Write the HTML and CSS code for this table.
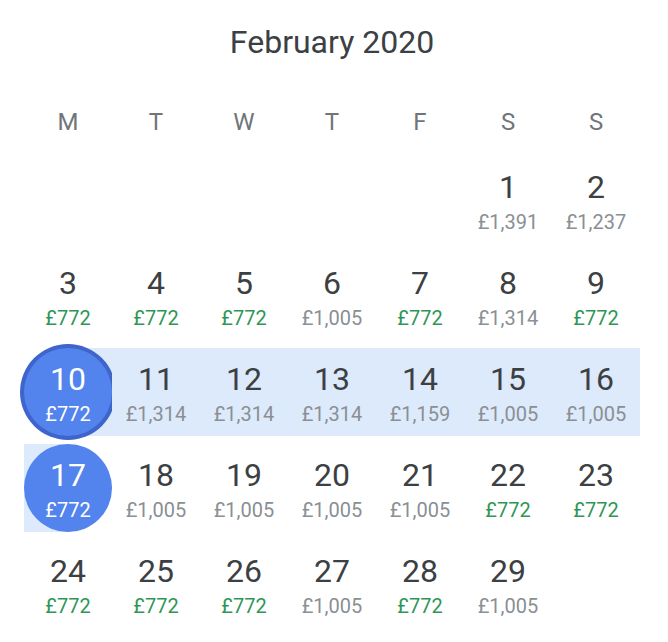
FILE: index.html
```html
<!DOCTYPE html>
<html lang="en">
<head>
<meta charset="utf-8">
<title>February 2020</title>
<link rel="stylesheet" href="styles.css">
</head>
<body>
<div class="calendar">
  <h1 class="month">February 2020</h1>
  <div class="weekdays">
    <span>M</span><span>T</span><span>W</span><span>T</span><span>F</span><span>S</span><span>S</span>
  </div>
  <div class="days">
    <div class="cell"></div>
    <div class="cell"></div>
    <div class="cell"></div>
    <div class="cell"></div>
    <div class="cell"></div>
    <div class="cell"><div class="content"><span class="num">1</span><span class="price">£1,391</span></div></div>
    <div class="cell"><div class="content"><span class="num">2</span><span class="price">£1,237</span></div></div>

    <div class="cell"><div class="content"><span class="num">3</span><span class="price low">£772</span></div></div>
    <div class="cell"><div class="content"><span class="num">4</span><span class="price low">£772</span></div></div>
    <div class="cell"><div class="content"><span class="num">5</span><span class="price low">£772</span></div></div>
    <div class="cell"><div class="content"><span class="num">6</span><span class="price">£1,005</span></div></div>
    <div class="cell"><div class="content"><span class="num">7</span><span class="price low">£772</span></div></div>
    <div class="cell"><div class="content"><span class="num">8</span><span class="price">£1,314</span></div></div>
    <div class="cell"><div class="content"><span class="num">9</span><span class="price low">£772</span></div></div>

    <div class="cell range-start selected focused"><div class="dot"></div><div class="content"><span class="num">10</span><span class="price">£772</span></div></div>
    <div class="cell in-range"><div class="content"><span class="num">11</span><span class="price">£1,314</span></div></div>
    <div class="cell in-range"><div class="content"><span class="num">12</span><span class="price">£1,314</span></div></div>
    <div class="cell in-range"><div class="content"><span class="num">13</span><span class="price">£1,314</span></div></div>
    <div class="cell in-range"><div class="content"><span class="num">14</span><span class="price">£1,159</span></div></div>
    <div class="cell in-range"><div class="content"><span class="num">15</span><span class="price">£1,005</span></div></div>
    <div class="cell in-range"><div class="content"><span class="num">16</span><span class="price">£1,005</span></div></div>

    <div class="cell range-end selected"><div class="dot"></div><div class="content"><span class="num">17</span><span class="price">£772</span></div></div>
    <div class="cell"><div class="content"><span class="num">18</span><span class="price">£1,005</span></div></div>
    <div class="cell"><div class="content"><span class="num">19</span><span class="price">£1,005</span></div></div>
    <div class="cell"><div class="content"><span class="num">20</span><span class="price">£1,005</span></div></div>
    <div class="cell"><div class="content"><span class="num">21</span><span class="price">£1,005</span></div></div>
    <div class="cell"><div class="content"><span class="num">22</span><span class="price low">£772</span></div></div>
    <div class="cell"><div class="content"><span class="num">23</span><span class="price low">£772</span></div></div>

    <div class="cell"><div class="content"><span class="num">24</span><span class="price low">£772</span></div></div>
    <div class="cell"><div class="content"><span class="num">25</span><span class="price low">£772</span></div></div>
    <div class="cell"><div class="content"><span class="num">26</span><span class="price low">£772</span></div></div>
    <div class="cell"><div class="content"><span class="num">27</span><span class="price">£1,005</span></div></div>
    <div class="cell"><div class="content"><span class="num">28</span><span class="price low">£772</span></div></div>
    <div class="cell"><div class="content"><span class="num">29</span><span class="price">£1,005</span></div></div>
  </div>
</div>
</body>
</html>
```
FILE: styles.css
```css
html, body {
  margin: 0;
  padding: 0;
  background: #ffffff;
}

body {
  font-family: Roboto, "Noto Sans", "Liberation Sans", sans-serif;
  color: #3c4043;
}

.calendar {
  width: 616px;
  margin-left: 24px;
  padding-top: 22px;
}

.month {
  margin: 0;
  font-size: 32px;
  line-height: 40px;
  font-weight: 400;
  text-align: center;
  color: #3c4043;
}

.weekdays {
  display: grid;
  grid-template-columns: repeat(7, 88px);
  margin-top: 44px;
  font-size: 24px;
  line-height: 32px;
  color: #70757a;
  text-align: center;
}

.days {
  display: grid;
  grid-template-columns: repeat(7, 88px);
  grid-auto-rows: 88px;
  row-gap: 8px;
  margin-top: 18px;
}

.cell {
  display: grid;
  place-items: center;
}

.cell > * {
  grid-area: 1 / 1;
}

.cell.in-range {
  background: #ddeafb;
}

.cell.range-start {
  background: linear-gradient(to right, transparent 50%, #ddeafb 50%);
}

.cell.range-end {
  background: linear-gradient(to right, #ddeafb 50%, transparent 50%);
}

.dot {
  width: 88px;
  height: 88px;
  border-radius: 50%;
  background: #5383ec;
}

.focused .dot {
  box-shadow: 0 0 0 4px #3f64cb;
}

.content {
  align-self: start;
  display: flex;
  flex-direction: column;
  align-items: center;
  gap: 5px;
  padding-top: 13px;
}

.num {
  font-size: 32px;
  line-height: 36px;
  color: #3c4043;
}

.price {
  font-size: 20px;
  line-height: 24px;
  color: #8a8f94;
}

.price.low {
  color: #2f9655;
}

.selected .num,
.selected .price {
  color: #ffffff;
}
```
